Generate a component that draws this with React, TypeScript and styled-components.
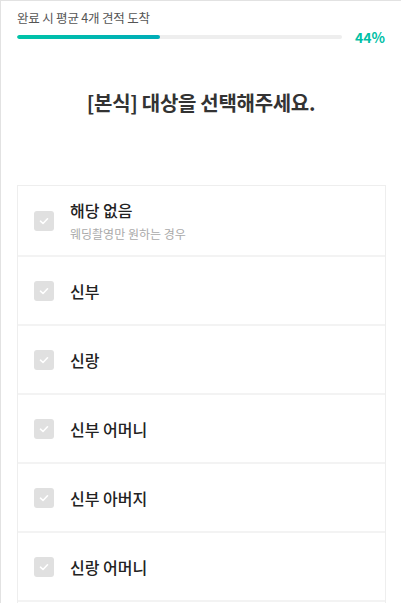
import styled, { createGlobalStyle } from "styled-components";

const GlobalStyle = createGlobalStyle`
  html, body {
    margin: 0;
    padding: 0;
    background: #fff;
    font-family: "Noto Sans CJK KR", "Noto Sans", sans-serif;
  }
`;

const Page = styled.div`
  width: 401px;
  height: 603px;
  box-sizing: border-box;
  border-top: 1px solid #e2e2e2;
  border-left: 1px solid #e2e2e2;
  overflow: hidden;
`;

const Header = styled.div`
  padding: 8px 16px 0 16px;
`;

const Caption = styled.div`
  font-size: 12.5px;
  color: #555;
  line-height: 18px;
  letter-spacing: -0.2px;
`;

const ProgressRow = styled.div`
  display: flex;
  align-items: center;
  margin-top: 1px;
  gap: 13px;
`;

const Track = styled.div`
  flex: 1;
  height: 4px;
  border-radius: 2px;
  background: #eeeeee;
  overflow: hidden;
`;

const Fill = styled.div`
  height: 100%;
  border-radius: 2px;
  background: linear-gradient(to right, #00c4a8, #00adb8);
`;

const Percent = styled.span`
  width: 30px;
  font-size: 14px;
  font-weight: 700;
  color: #00c0a6;
  line-height: 18px;
`;

const Title = styled.h1`
  margin: 42px 0 0;
  text-align: center;
  font-size: 20px;
  font-weight: 700;
  color: #333;
  line-height: 30px;
  letter-spacing: -0.3px;
`;

const List = styled.ul`
  list-style: none;
  margin: 67px 15px 0 16px;
  padding: 0;
  border: 1px solid #eeeeee;
  border-bottom: none;
`;

const Item = styled.li`
  display: flex;
  align-items: center;
  height: 69px;
  box-sizing: border-box;
  padding: 0 16px;
  gap: 16px;
  & + & {
    border-top: 2px solid #f3f3f3;
  }
`;

const Box = styled.span`
  width: 20px;
  height: 20px;
  border-radius: 3px;
  background: #e0e0e0;
  display: flex;
  align-items: center;
  justify-content: center;
  flex-shrink: 0;
`;

const Texts = styled.div`
  display: flex;
  flex-direction: column;
`;

const Label = styled.span`
  font-size: 16px;
  font-weight: 500;
  color: #222;
  line-height: 22px;
`;

const Sub = styled.span`
  font-size: 12px;
  color: #aaa;
  line-height: 18px;
  margin-top: 4px;
`;

const Check = () => (
  <svg width="12" height="12" viewBox="0 0 12 12">
    <path d="M2.5 6.2 L5 8.5 L9.5 3.8" fill="none" stroke="#fff" strokeWidth="1.6" strokeLinecap="round" strokeLinejoin="round" />
  </svg>
);

const options = [
  { label: "해당 없음", sub: "웨딩촬영만 원하는 경우" },
  { label: "신부" },
  { label: "신랑" },
  { label: "신부 어머니" },
  { label: "신부 아버지" },
  { label: "신랑 어머니" },
  { label: "신랑 아버지" },
];

export default function App() {
  const progress = 44;
  return (
    <>
      <GlobalStyle />
      <Page>
        <Header>
          <Caption>완료 시 평균 4개 견적 도착</Caption>
          <ProgressRow>
            <Track>
              <Fill style={{ width: `${progress}%` }} />
            </Track>
            <Percent>{progress}%</Percent>
          </ProgressRow>
        </Header>
        <Title>[본식] 대상을 선택해주세요.</Title>
        <List>
          {options.map((o) => (
            <Item key={o.label}>
              <Box>
                <Check />
              </Box>
              <Texts>
                <Label>{o.label}</Label>
                {o.sub && <Sub>{o.sub}</Sub>}
              </Texts>
            </Item>
          ))}
        </List>
      </Page>
    </>
  );
}
